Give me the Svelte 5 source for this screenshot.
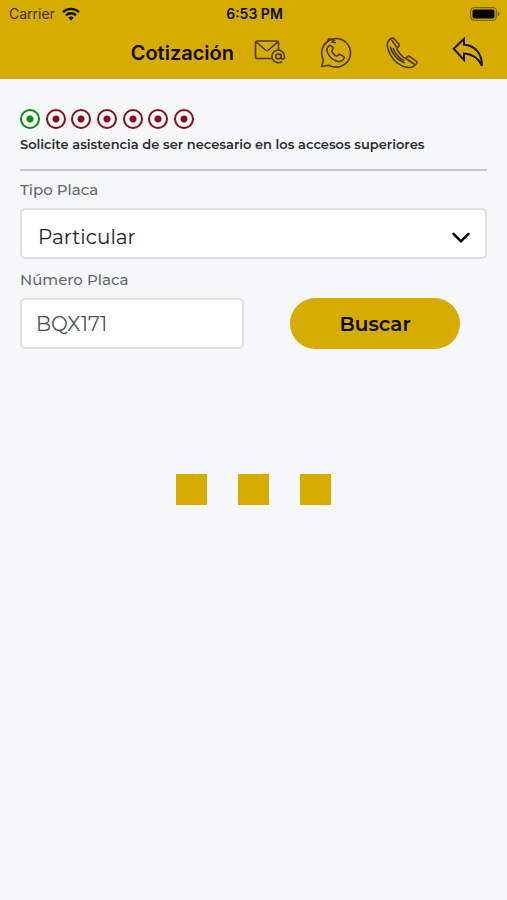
<script lang="ts">
  const plateTypes = ['Particular', 'Público', 'Oficial'];
  const steps = 7;

  let current = $state(0);
  let plateType = $state('Particular');
  let plate = $state('BQX171');
</script>

<header>
  <div class="status">
    <span class="carrier">
      Carrier
      <svg width="18" height="14" viewBox="0 0 18 14" fill="none" stroke="#0d0b00" stroke-width="2.4" aria-hidden="true">
        <path d="M1 5.2a11.4 11.4 0 0 1 16 0" />
        <path d="M4 8.3a7.1 7.1 0 0 1 10 0" />
        <path d="M9 13.6l-2.7-2.8a3.9 3.9 0 0 1 5.4 0z" fill="#0d0b00" stroke="none" />
      </svg>
    </span>
    <time>6:53 PM</time>
    <svg class="battery" width="30" height="14" viewBox="0 0 30 14" aria-hidden="true">
      <rect x=".7" y=".7" width="25.6" height="12.6" rx="3.6" fill="none" stroke="#7d6500" stroke-width="1.2" />
      <rect x="2.5" y="2.5" width="22" height="9" rx="1.8" fill="#000" />
      <path d="M27.6 4.6q2 .8 2 2.4t-2 2.4z" fill="#7d6500" />
    </svg>
  </div>
  <nav>
    <h1>Cotización</h1>
    <a href="#correo" aria-label="Correo">
      <svg width="32" height="32" viewBox="0 0 32 32">
        <path d="M18 21.5H3A1.5 1.5 0 0 1 1.500 20V5.500A1.500 1.500 0 0 1 3 4h20a1.500 1.500 0 0 1 1.500 1.500v7" />
        <path d="M2.200 4.800l9.300 8.200q1.500 1.200 3 0l9.300-8.200" />
        <path d="M28.200 24.300a6.300 6.300 0 1 1 2.300-4.800c0 3.300-3.600 3.500-3.600.7v-3.700" />
        <circle cx="24.300" cy="19.500" r="2.500" />
      </svg>
    </a>
    <a href="#whatsapp" aria-label="WhatsApp">
      <svg width="32" height="32" viewBox="0 0 32 32">
        <path d="M7.500 4.500A14.300 14.300 0 1 1 9 28.200L1.500 29.500l2-6.500A14.300 14.300 0 0 1 7.500 4.500z" />
        <path d="M7.500 4.500L9 1.700l5.500 1.500L12 5l4 .7" />
        <path d="M10.200 8.300c-3 1.500-4 4-2.700 7.200 1.900 4.300 5.200 7.400 9.500 8.700 3.200.9 5.700 0 7.100-2.700.5-1 .1-1.600-.6-2.100l-3.200-1.800c-.8-.5-1.500-.3-2.200.7-.9 1.100-1.800 1-3.100 0-1.500-1.200-2.600-2.400-3.200-4-.3-.9.100-1.400.8-1.900.9-.7.900-1.400.4-2.300z" />
      </svg>
    </a>
    <a href="#llamar" aria-label="Llamar">
      <svg width="32" height="32" viewBox="0 0 32 32">
        <path d="M5.200 1.500C1.300 3.500.7 7.300 1.900 11.600 4.300 20.400 11 27.700 19.300 30c4.700 1.200 8.700.2 11.200-3.400.7-1.100.4-2.100-.6-2.800l-6-4.200c-1-.6-2-.5-2.700.4-1.100 1.500-2.200 1.500-3.800.3-2.700-2-4.700-4.300-6-7.100-.7-1.500-.4-2.500.9-3.300 1-.7 1.300-1.500.6-2.600L8.400 2.100c-.8-1.100-1.900-1.300-3.200-.6z" />
        <path d="M5.300 2.500l5.600 8M20 21.500l8.700 6M4.200 9.500c1.700 7.500 7 13.300 14.500 16.500M7 11c1.800 5.600 5.900 10 11.200 12.600" />
      </svg>
    </a>
    <a href="#volver" aria-label="Volver">
      <svg class="bold" width="32" height="32" viewBox="0 0 32 32">
        <path d="M1.700 11.800L12 1.800v6C23 8.400 30 16.500 30 28.700 26 20.500 20.500 17 12 16.600v6.400z" />
      </svg>
    </a>
  </nav>
</header>

<main>
  <ol class="steps" aria-label="Pasos">
    {#each { length: steps } as _, i}
      <li class:active={i === current}></li>
    {/each}
  </ol>
  <p class="hint">Solicite asistencia de ser necesario en los accesos superiores</p>
  <hr />

  <form onsubmit={(e) => e.preventDefault()}>
    <label for="tipo">Tipo Placa</label>
    <div class="select">
      <select id="tipo" bind:value={plateType}>
        {#each plateTypes as type}
          <option>{type}</option>
        {/each}
      </select>
      <svg width="18" height="12" viewBox="0 0 18 12" fill="none" stroke="#000" stroke-width="2.5" aria-hidden="true">
        <path d="M1.500 1.800L9 9.300l7.500-7.500" stroke-linecap="round" />
      </svg>
    </div>
    <label for="placa">Número Placa</label>
    <div class="row">
      <input id="placa" type="text" bind:value={plate} />
      <button type="submit">Buscar</button>
    </div>
  </form>

  <div class="loader" role="status" aria-label="Cargando">
    <span></span><span></span><span></span>
  </div>
</main>

<style>
  :global(body){background:#f5f7f9}
  header{background:#d7ac00;color:#0d0b00;font-family:Inter,"Liberation Sans",sans-serif}
  .status{display:grid;grid-template-columns:1fr auto 1fr;align-items:center;height:27px;padding:0 7px 0 9px;font-size:14px}
  .carrier{display:flex;align-items:center;gap:7px;color:#3c3000}
  time{font-weight:600}
  .battery{justify-self:end}
  nav{display:flex;align-items:center;justify-content:flex-end;height:52px;padding-right:6px}
  h1{margin:0 3px 0 0;font-size:20px;font-weight:600;line-height:24px}
  nav a{display:flex;justify-content:center;width:66px}
  nav svg{fill:none;stroke:#4a3b00;stroke-width:1.6;stroke-linejoin:round}
  nav .bold{stroke:#1a1500;stroke-width:2;stroke-linejoin:miter}

  main{padding:30px 20px;font-family:Montserrat,Inter,"Liberation Sans",sans-serif}
  .steps{display:flex;justify-content:space-between;width:174px;margin:0;padding:0;list-style:none}
  .steps li{box-sizing:border-box;width:20px;height:20px;border:2px solid;border-radius:50%;color:#85101a;background:radial-gradient(circle,currentColor 3px,transparent 4px)}
  .steps .active{color:#0c8a0c}
  .hint{margin:5px 0 0;font-size:13px;font-weight:600;line-height:20px;color:#2c2d2f}
  hr{height:2px;margin:15px 0 0;border:0;background:#c5c6c9}

  label{display:block;padding:8px 0 7px;font-size:15px;font-weight:500;line-height:22px;color:#66696d}
  .select{position:relative;margin-bottom:2px}
  .select svg{position:absolute;right:17px;top:24px;pointer-events:none}
  select,input{box-sizing:border-box;width:100%;height:51px;border:2px solid #dfe1e3;border-radius:5px;background:#fff;font:400 20px Montserrat,Inter,"Liberation Sans",sans-serif}
  select{display:block;appearance:none;padding:6px 40px 0 16px;color:#222}
  input{padding:0 14px;color:#4d5156}
  .row{display:grid;grid-template-columns:1fr 1fr;gap:20px}
  button{justify-self:center;width:76%;height:51px;border:0;border-radius:26px;background:#d7ac00;color:#0d0b00;font:600 20px Montserrat,Inter,"Liberation Sans",sans-serif}

  .loader{display:flex;justify-content:center;gap:31px;margin-top:125px}
  .loader span{width:31px;height:31px;background:#d7ac00}
</style>
